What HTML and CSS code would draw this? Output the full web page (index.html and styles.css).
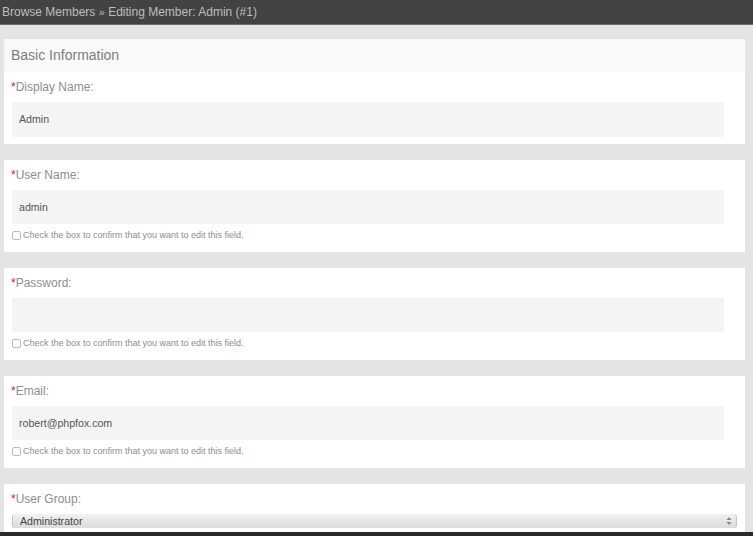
FILE: index.html
```html
<!DOCTYPE html>
<html>
<head>
<meta charset="utf-8">
<link rel="stylesheet" href="styles.css">
</head>
<body>
<div class="topbar">Browse Members <span class="sep">»</span> Editing Member: Admin (#1)</div>
<main class="content">
  <section class="card first">
    <div class="card-header">Basic Information</div>
    <div class="field">
      <label class="label"><span class="req">*</span>Display Name:</label>
      <div class="input">Admin</div>
    </div>
  </section>
  <section class="card">
    <div class="field">
      <label class="label"><span class="req">*</span>User Name:</label>
      <div class="input">admin</div>
      <div class="confirm"><span class="box"></span>Check the box to confirm that you want to edit this field.</div>
    </div>
  </section>
  <section class="card">
    <div class="field">
      <label class="label"><span class="req">*</span>Password:</label>
      <div class="input"></div>
      <div class="confirm"><span class="box"></span>Check the box to confirm that you want to edit this field.</div>
    </div>
  </section>
  <section class="card">
    <div class="field">
      <label class="label"><span class="req">*</span>Email:</label>
      <div class="input">robert@phpfox.com</div>
      <div class="confirm"><span class="box"></span>Check the box to confirm that you want to edit this field.</div>
    </div>
  </section>
  <section class="card last">
    <div class="field">
      <label class="label"><span class="req">*</span>User Group:</label>
      <div class="select"><span>Administrator</span>
        <svg class="arrows" width="6" height="10" viewBox="0 0 6 10"><path d="M3 1 L5.5 4 H0.5 Z M3 9 L5.5 6 H0.5 Z" fill="#888"/></svg>
      </div>
    </div>
  </section>
</main>
<div class="bottom"></div>
</body>
</html>
```
FILE: styles.css
```css
* { box-sizing: border-box; }
html, body { margin: 0; padding: 0; }
body {
  width: 753px;
  height: 536px;
  overflow: hidden;
  background: #e4e4e4;
  font-family: "Liberation Sans", Arial, sans-serif;
  position: relative;
}
.topbar {
  height: 25px;
  background: #434343;
  border-bottom: 1px solid #6a6a6a;
  color: #bdbdbd;
  font-size: 12px;
  line-height: 24px;
  padding-left: 2px;
  white-space: nowrap;
}
.sep { font-size: 11px; }
.content {
  display: flex;
  flex-direction: column;
  gap: 16px;
  padding: 14px 8px 0 4px;
}
.card {
  background: #fff;
}
.card-header {
  background: #f9f9f9;
  height: 33px;
  padding-left: 7px;
  font-size: 14px;
  line-height: 33px;
  color: #7d7d7d;
}
.field {
  padding: 8px 0 7px 8px;
}
.first .field { padding-bottom: 7px; }
.first .input { height: 35px; line-height: 35px; }
.label {
  display: block;
  font-size: 12px;
  line-height: 14px;
  color: #8d8d8d;
  margin-left: -1px;
}
.req { color: #c62828; }
.input {
  margin-top: 8px;
  width: 712px;
  height: 34px;
  background: #f4f4f4;
  font-size: 10.6px;
  line-height: 34px;
  color: #555;
  padding-left: 7px;
}
.confirm {
  display: flex;
  align-items: center;
  margin-top: 5px;
  margin-bottom: 4px;
  font-size: 9px;
  line-height: 12px;
  color: #8d8d8d;
  white-space: nowrap;
}
.box {
  width: 9px;
  height: 9px;
  border: 1px solid #bcbcbc;
  border-radius: 2px;
  background: #fff;
  margin-right: 2px;
  flex: none;
}
.last .field { padding-bottom: 8px; }
.select {
  margin-top: 8px;
  width: 725px;
  height: 14px;
  border-radius: 3px;
  border-left: 1px solid #c4c4c4;
  border-right: 1px solid #c4c4c4;
  background: linear-gradient(#f1f1f1, #dbdbdb);
  display: flex;
  align-items: center;
  justify-content: space-between;
  padding: 0 4px 0 7px;
  font-size: 10.6px;
  color: #444;
}
.bottom {
  position: absolute;
  left: 0;
  right: 0;
  bottom: 0;
  height: 4px;
  background: #2a2a2a;
}
```
